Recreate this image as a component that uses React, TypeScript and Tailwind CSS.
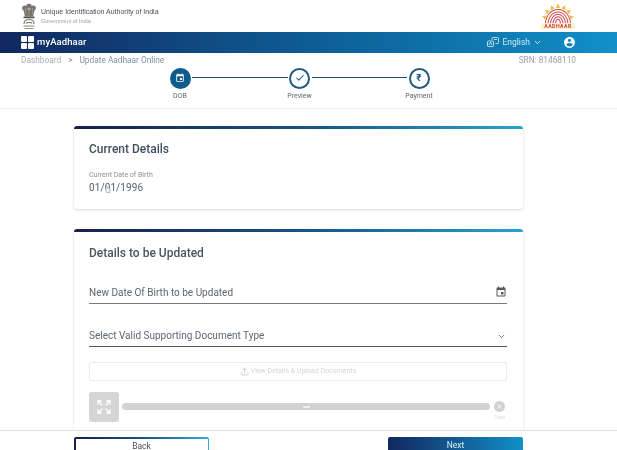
import React from "react";
import { Check, ChevronDown, Upload, Expand, X } from "lucide-react";

function Emblem() {
  return (
    <svg width="16" height="27" viewBox="0 0 16 27" className="shrink-0">
      <g fill="#77736a">
        <ellipse cx="8" cy="3.200" rx="2.600" ry="2.400" />
        <ellipse cx="4" cy="5" rx="2.800" ry="2.600" />
        <ellipse cx="12" cy="5" rx="2.800" ry="2.600" />
        <path d="M2.500 6.500h11l-1 5.500c-.3 1-1 1.500-2 1.500h-5c-1 0-1.700-.5-2-1.500z" />
      </g>
      <path d="M4.500 5v7M8 4v9M11.500 5v7" stroke="#a5a298" strokeWidth=".7" />
      <rect x="2.500" y="13.500" width="11" height="1.800" rx=".5" fill="#56534b" />
      <path d="M3 21c0-3 2-4.500 5-4.500S13 18 13 21" fill="none" stroke="#85817a" strokeWidth="1.200" />
      <path d="M5 20.500c1-1.500 5-1.500 6 0M2.500 23h11" fill="none" stroke="#85817a" strokeWidth="1.100" />
      <path d="M3.500 25.500h9" stroke="#9a968e" strokeWidth="1.100" />
    </svg>
  );
}

function AadhaarLogo() {
  const rays = [-78, -52, -26, 0, 26, 52, 78];
  return (
    <svg width="36" height="26" viewBox="0 0 36 26" className="shrink-0">
      {rays.map((a) => (
        <path
          key={a}
          transform={`rotate(${a} 18 17)`}
          d="M15.800 5L18 .5 20.200 5z"
          fill="#f0bd3c"
        />
      ))}
      <path d="M5 20C5 11 11 5.500 18 5.500S31 11 31 20z" fill="#ffffff" />
      <g fill="none" stroke="#d2494e" strokeWidth="1.050">
        <path d="M5.500 20.500C6 12.500 11 6.500 18 6.500S30 12.500 30.500 20.500" />
        <path d="M8 20.500C8.500 14 12.500 8.900 18 8.900S27.500 14 28 20.500" />
        <path d="M10.500 20.500c.4-5 3.400-9.200 7.500-9.200s7.100 4.200 7.500 9.200" />
        <path d="M13 20.500c.3-3.500 2.300-6.800 5-6.800s4.700 3.300 5 6.800" />
        <path d="M15.500 20.500c.2-2 1.200-4.300 2.500-4.300s2.300 2.300 2.500 4.300" />
      </g>
      <rect x="1" y="20.500" width="34" height="5.500" fill="#fdf1cf" />
      <text x="18" y="25.300" textAnchor="middle" fontSize="5.200" fontWeight="700" letterSpacing=".45" fill="#c8423f" fontFamily="Roboto, sans-serif">AADHAAR</text>
    </svg>
  );
}

function EventIcon({ size, className }: { size: number; className?: string }) {
  return (
    <svg width={size} height={size} viewBox="0 0 24 24" fill="currentColor" className={className}>
      <path d="M17 12h-5v5h5v-5zM16 1v2H8V1H6v2H5c-1.110 0-1.990.9-1.990 2L3 19c0 1.100.89 2 2 2h14c1.100 0 2-.9 2-2V5c0-1.100-.9-2-2-2h-1V1h-2zm3 18H5V8h14v11z" />
    </svg>
  );
}

function Step({ label, active, children }: { label: string; active?: boolean; children: React.ReactNode }) {
  return (
    <div className="relative flex h-[22px] w-[22px] shrink-0 items-center justify-center">
      <div className={`flex h-[21px] w-[21px] items-center justify-center rounded-full border-2 ${active ? "border-[#0f5c8c] bg-[#0f5c8c] text-white" : "border-[#1f5a7f] bg-white text-[#1f5a7f]"}`}>
        {children}
      </div>
      <span className="absolute left-1/2 top-[25px] -translate-x-1/2 text-[7px] leading-[9px] text-[#5f666d]">{label}</span>
    </div>
  );
}

function Card({ className, children }: { className: string; children: React.ReactNode }) {
  return (
    <section className={`overflow-hidden rounded-[3px] bg-white shadow-[0_1px_3px_rgba(0,0,0,0.16)] ${className}`}>
      <div className="h-[3px] bg-gradient-to-r from-[#17204f] via-[#17517f] to-[#2aa3cf]" />
      {children}
    </section>
  );
}

export default function App() {
  return (
    <div className="relative h-[450px] w-[617px] overflow-hidden bg-white font-['Roboto',sans-serif] text-[#46505a] blur-[0.35px]">
      <header className="flex h-[32px] items-center justify-between pl-[21px] pr-[41px]">
        <div className="flex items-center gap-[4px]">
          <Emblem />
          <div>
            <div className="font-['Liberation_Sans',sans-serif] text-[7px] leading-[10px] text-[#4a4f55]">Unique Identification Authority of India</div>
            <div className="font-['Liberation_Sans',sans-serif] text-[5.5px] leading-[8px] text-[#9a9ea3]">Government of India</div>
          </div>
        </div>
        <AadhaarLogo />
      </header>

      <nav className="flex h-[21px] items-center justify-between bg-gradient-to-r from-[#10285f] via-[#0d5c94] to-[#1190c8] pl-[21px] pr-[41px] text-white">
        <div className="flex items-center gap-[3px]">
          <div className="grid grid-cols-2 gap-[1px]">
            <span className="h-[6px] w-[6px] rounded-[1px] bg-white" />
            <span className="h-[6px] w-[6px] rounded-[1px] bg-white" />
            <span className="h-[6px] w-[6px] rounded-[1px] bg-white" />
            <span className="h-[6px] w-[6px] rounded-[1px] bg-white" />
          </div>
          <span className="text-[9.5px] font-medium tracking-[0.1px]">myAadhaar</span>
        </div>
        <div className="flex items-center text-[#cfe8f5]">
          <svg width="12" height="11" viewBox="0 0 12 11" fill="none" stroke="currentColor" strokeWidth=".9">
            <rect x=".5" y="4" width="6" height="5.500" rx=".8" />
            <path d="M5 3V1.300c0-.4.3-.8.8-.8h5c.4 0 .7.4.7.8v4.400c0 .4-.3.8-.7.8H8.500" />
            <path d="M2 8l1.500-3L5 8M7 2.500h3" />
          </svg>
          <span className="ml-[3px] text-[8.5px]">English</span>
          <ChevronDown size={9} strokeWidth={2.5} className="ml-[3px]" />
          <svg width="13" height="13" viewBox="0 0 24 24" fill="currentColor" className="ml-[21px] text-white">
            <path d="M12 2C6.480 2 2 6.480 2 12s4.480 10 10 10 10-4.480 10-10S17.520 2 12 2zm0 3c1.660 0 3 1.340 3 3s-1.340 3-3 3-3-1.340-3-3 1.340-3 3-3zm0 14.200c-2.500 0-4.710-1.280-6-3.220.03-1.990 4-3.080 6-3.080 1.990 0 5.970 1.090 6 3.080-1.290 1.940-3.500 3.220-6 3.220z" />
          </svg>
        </div>
      </nav>

      <div className="flex h-[14px] items-center justify-between pl-[21px] pr-[41px] text-[8.3px] leading-none">
        <div className="flex items-center">
          <span className="text-[#a9aeb3]">Dashboard</span>
          <span className="mx-[7px] text-[#7e8a94]">&gt;</span>
          <span className="text-[#7d93a6]">Update Aadhaar Online</span>
        </div>
        <span className="text-[#9b9fa3]">SRN: 81468110</span>
      </div>

      <div className="flex h-[41px] items-start pl-[169px] pr-[187px]">
        <Step label="DOB" active><EventIcon size={10} /></Step>
        <div className="mx-[1px] mt-[10px] h-[1px] flex-1 border-t border-[#1f4f6f]" />
        <Step label="Preview"><Check size={10} strokeWidth={2.5} /></Step>
        <div className="mx-[1px] mt-[10px] h-[1px] flex-1 border-t border-[#1f4f6f]" />
        <Step label="Payment"><span className="text-[10px] font-bold leading-none">₹</span></Step>
      </div>

      <main className="h-[322px] border-t border-[#f0f0f0] pl-[74px] pr-[94px] pt-[17px]">
        <Card className="h-[83px]">
          <div className="pl-[15px] pr-[16px] pt-[12px]">
            <h2 className="text-[12px] font-medium leading-[16px] text-[#3e4f60]">Current Details</h2>
            <div className="mt-[14px] text-[7px] leading-[9px] text-[#8a8f95]">Current Date of Birth</div>
            <div className="relative mt-[2px] w-fit text-[10px] leading-[12px] tracking-[0.1px] text-[#55626f]">
              01/01/1996
              <svg width="6" height="8" viewBox="0 0 6 8" className="absolute left-[16px] top-[3px]">
                <path d="M1 3.500V1.200c0-.9 1.300-.9 1.300 0V3l2 .5c.7.2 1 .7.9 1.300L4.800 7.500H1.800L.3 4.800z" fill="#f4f4f4" stroke="#8a8f95" strokeWidth=".6" />
              </svg>
            </div>
          </div>
        </Card>
        <Card className="mt-[20px] h-[230px]">
          <div className="pl-[15px] pr-[16px] pt-[13px]">
            <h2 className="text-[12px] font-medium leading-[16px] text-[#4a5560]">Details to be Updated</h2>
            <div className="mt-[20px] flex h-[23px] items-center justify-between border-b-[1.5px] border-[#7a7a7a] text-[10px] text-[#5e6670]">
              <span>New Date Of Birth to be Updated</span>
              <EventIcon size={12} className="text-[#555b60]" />
            </div>
            <div className="mt-[20px] flex h-[23px] items-center justify-between border-b-[1.5px] border-[#555555] text-[10px] text-[#5e6670]">
              <span>Select Valid Supporting Document Type</span>
              <ChevronDown size={9} strokeWidth={2.5} className="mr-[1px] mt-[3px] text-[#666]" />
            </div>
            <div className="mt-[15px] flex h-[19px] items-center justify-center gap-[2px] rounded-[2px] border border-[#ececec] text-[7px] text-[#d4d4d4]">
              <Upload size={9} strokeWidth={2.5} className="text-[#cfcfcf]" />
              <span>View Details &amp; Upload Documents</span>
            </div>
            <div className="mt-[11px] flex items-start">
              <div className="flex h-[30px] w-[30px] items-center justify-center rounded-[3px] bg-[#d5d5d5] text-white">
                <Expand size={16} strokeWidth={2} />
              </div>
              <div className="ml-[3px] mt-[11px] flex h-[7px] flex-1 items-center justify-center rounded-full bg-[#d2d2d2]">
                <span className="h-[2px] w-[7px] bg-[#eeeeee]" />
              </div>
              <div className="ml-[2px] mt-[9px] flex w-[15px] flex-col items-center">
                <span className="flex h-[11px] w-[11px] items-center justify-center rounded-full bg-[#d2d2d2] text-white"><X size={7} strokeWidth={3} /></span>
                <span className="mt-[2px] text-[5px] leading-[6px] text-[#dddddd]">Clear</span>
              </div>
            </div>
          </div>
        </Card>
      </main>

      <footer className="absolute inset-x-0 top-[430px] flex h-[20px] justify-between border-t border-[#dddddd] bg-white pl-[74px] pr-[94px] pt-[6px]">
        <div className="h-[20px] w-[135px] rounded-t-[2px] bg-gradient-to-r from-[#17204f] via-[#17517f] to-[#2fb0da] px-[1.5px] pt-[1.5px]">
          <button className="block h-full w-full bg-white pb-[4px] text-[8.5px] leading-[12px] text-[#4a5056]">Back</button>
        </div>
        <button className="h-[20px] w-[135px] rounded-t-[2px] bg-gradient-to-r from-[#10285f] to-[#1190c8] pb-[4px] text-[8.5px] leading-[12px] text-[#d8f0fa]">Next</button>
      </footer>
    </div>
  );
}
